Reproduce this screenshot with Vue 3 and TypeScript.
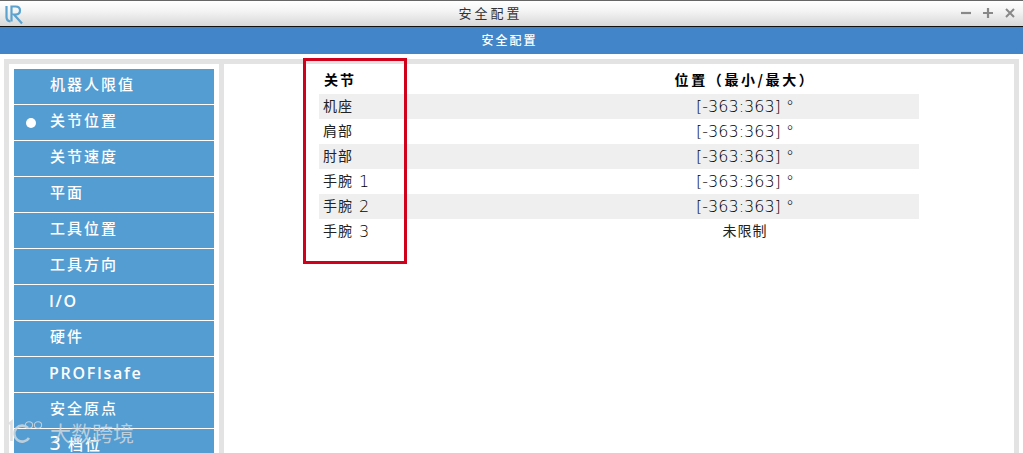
<script setup lang="ts">
const menu = [
  { label: '机器人限值' },
  { label: '关节位置', active: true },
  { label: '关节速度' },
  { label: '平面' },
  { label: '工具位置' },
  { label: '工具方向' },
  { label: 'I/O', latin: true },
  { label: '硬件' },
  { label: 'PROFIsafe', latin: true },
  { label: '安全原点' },
  { label: '档位', digit: '3' },
]
const rows = [
  { joint: '机座', range: '[-363:363] °' },
  { joint: '肩部', range: '[-363:363] °' },
  { joint: '肘部', range: '[-363:363] °' },
  { joint: '手腕', digit: '1', range: '[-363:363] °' },
  { joint: '手腕', digit: '2', range: '[-363:363] °' },
  { joint: '手腕', digit: '3', range: '未限制', cjk: true },
]
</script>

<template>
  <div class="window">
    <header class="titlebar">
      <svg class="logo" width="22" height="22" viewBox="0 0 22 22" fill="none" stroke="#5ba2cf" stroke-width="2.2">
        <path d="M3.5 3 V14 Q3.5 18 7.5 18.5" />
        <path d="M8.5 18.5 V3.5 H12.5 Q17 3.5 17 7.5 Q17 11.5 12.5 11.5 L11 11.5 L19 20.5" />
      </svg>
      <span class="title">安全配置</span>
      <div class="controls">
        <svg width="10" height="10" viewBox="0 0 10 10" stroke="#888" stroke-width="2.2"><path d="M0 5 H10" /></svg>
        <svg width="10" height="10" viewBox="0 0 10 10" stroke="#888" stroke-width="2.2"><path d="M0 5 H10 M5 0 V10" /></svg>
        <svg width="10" height="10" viewBox="0 0 10 10" stroke="#888" stroke-width="2"><path d="M1 1 L9 9 M9 1 L1 9" /></svg>
      </div>
    </header>
    <div class="banner">安全配置</div>
    <main class="frame">
      <nav class="sidebar">
        <div v-for="item in menu" :key="item.label" class="menu-item" :class="{ latin: item.latin, digit: item.digit }">
          <span v-if="item.active" class="dot"></span>
          <span v-if="item.digit" class="menu-digit">{{ item.digit }}</span>
          <span>{{ item.label }}</span>
        </div>
      </nav>
      <section class="content">
        <table class="joints">
          <thead>
            <tr><th class="joint">关节</th><th class="range">位置（最小/最大）</th></tr>
          </thead>
          <tbody>
            <tr v-for="row in rows" :key="row.joint + (row.digit ?? '')">
              <td class="joint"><span>{{ row.joint }}</span><span v-if="row.digit" class="num">{{ row.digit }}</span></td>
              <td class="range" :class="{ cjk: row.cjk }">{{ row.range }}</td>
            </tr>
          </tbody>
        </table>
      </section>
    </main>
    <div class="callout"></div>
    <div class="watermark">
      <svg width="38" height="26" viewBox="0 0 38 26" fill="none" stroke="#d8dbde" stroke-width="2.6">
        <path d="M1 5 L3.5 3 V22" />
        <path d="M20 9 A8 8 0 1 0 21 19" />
        <ellipse cx="21" cy="6" rx="3.6" ry="3.2" stroke-width="1.1" />
        <ellipse cx="30" cy="6" rx="3.6" ry="3.2" stroke-width="1.1" />
      </svg>
      <span>大数跨境</span>
    </div>
  </div>
</template>

<style>
html, body { margin: 0; background: #fff; overflow: hidden; }
</style>

<style scoped>
.window {
  position: relative;
  width: 1023px;
  height: 453px;
  overflow: hidden;
  display: flex;
  flex-direction: column;
  font-family: "Noto Sans CJK SC", "DejaVu Sans", sans-serif;
  background: #fff;
}
.titlebar {
  position: relative;
  flex: none;
  box-sizing: border-box;
  height: 27px;
  border-top: 1px solid #666;
  border-bottom: 1px solid #111;
  background: linear-gradient(#ffffff, #f4f4f4 40%, #d8d8d8);
  display: flex;
  align-items: center;
  justify-content: center;
}
.logo { position: absolute; left: 3px; top: 2px; }
.title {
  font-size: 13px;
  letter-spacing: 3px;
  color: #333;
  margin-right: 42px;
  padding-bottom: 3px;
}
.controls {
  position: absolute;
  right: 8px;
  top: 7px;
  display: flex;
  gap: 12px;
}
.banner {
  flex: none;
  height: 27px;
  box-sizing: border-box;
  padding: 0 4px 3px 0;
  background: #4285c8;
  color: #fff;
  font-size: 12px;
  letter-spacing: 2px;
  font-weight: 500;
  display: flex;
  align-items: center;
  justify-content: center;
}
.frame {
  flex: none;
  height: 420px;
  margin: 5px 4px 0;
  padding: 5px;
  background: #e3e3e3;
  display: flex;
  gap: 5px;
}
.sidebar {
  flex: none;
  box-sizing: border-box;
  width: 210px;
  padding: 5px;
  background: #fff;
  display: flex;
  flex-direction: column;
  gap: 1px;
}
.menu-item {
  position: relative;
  flex: none;
  height: 35px;
  box-sizing: border-box;
  padding: 0 0 7px 36px;
  background: #549dd2;
  color: #fff;
  font-size: 15px;
  font-weight: 500;
  letter-spacing: 2px;
  display: flex;
  align-items: center;
}
.menu-item.latin {
  font-family: "Open Sans", sans-serif;
  font-weight: 600;
  font-size: 16px;
  letter-spacing: 1.7px;
  padding: 0 0 3px 35px;
}
.menu-item.digit { padding-left: 35px; }
.menu-digit {
  font-family: "DejaVu Sans", sans-serif;
  font-size: 19px;
  margin-right: 7px;
  letter-spacing: 0;
}
.dot {
  position: absolute;
  left: 12px;
  top: 13px;
  width: 10px;
  height: 10px;
  border-radius: 50%;
  background: #fff;
}
.content {
  flex: 1;
  background: #fff;
  padding: 3px 95px 0;
}
.joints {
  width: 600px;
  border-collapse: collapse;
  table-layout: fixed;
  font-size: 14px;
  color: #222;
}
.joints th {
  height: 27px;
  box-sizing: border-box;
  padding: 0 0 3px;
  color: #000;
  font-weight: 700;
  letter-spacing: 2px;
}
.joints td {
  height: 25px;
  box-sizing: border-box;
  padding: 0 0 3px;
}
.joints tbody tr:nth-child(odd) { background: #efefef; }
.joints .joint { width: 252px; padding-left: 4px; text-align: left; letter-spacing: 1px; }
.joints th.joint { padding-left: 5px; letter-spacing: 2px; }
.num {
  font-family: "DejaVu Sans", sans-serif;
  font-weight: 200;
  font-size: 16px;
  color: #000;
  margin-left: 6px;
  vertical-align: -1px;
}
.joints .range {
  padding: 0;
  text-align: center;
  font-family: "DejaVu Sans", "Noto Sans CJK SC", sans-serif;
  font-weight: 200;
  font-size: 16px;
  color: #000;
  letter-spacing: 0;
}
.joints td.range.cjk {
  padding-bottom: 3px;
  font-family: "Noto Sans CJK SC", sans-serif;
  font-weight: 400;
  font-size: 14px;
  letter-spacing: 1px;
  color: #222;
}
.joints th.range {
  padding-bottom: 3px;
  font-family: "Noto Sans CJK SC", sans-serif;
  font-weight: 700;
  font-size: 14px;
  letter-spacing: 2.6px;
  color: #000;
}
.callout {
  position: absolute;
  left: 303px;
  top: 58px;
  width: 104px;
  height: 206px;
  box-sizing: border-box;
  border: 3px solid #d0021b;
}
.watermark {
  position: absolute;
  left: 8px;
  top: 419px;
  display: flex;
  align-items: flex-start;
  opacity: 0.8;
  color: #d8dbde;
  font-size: 21px;
  line-height: 26px;
}
.watermark span { margin-left: 4px; }
</style>
